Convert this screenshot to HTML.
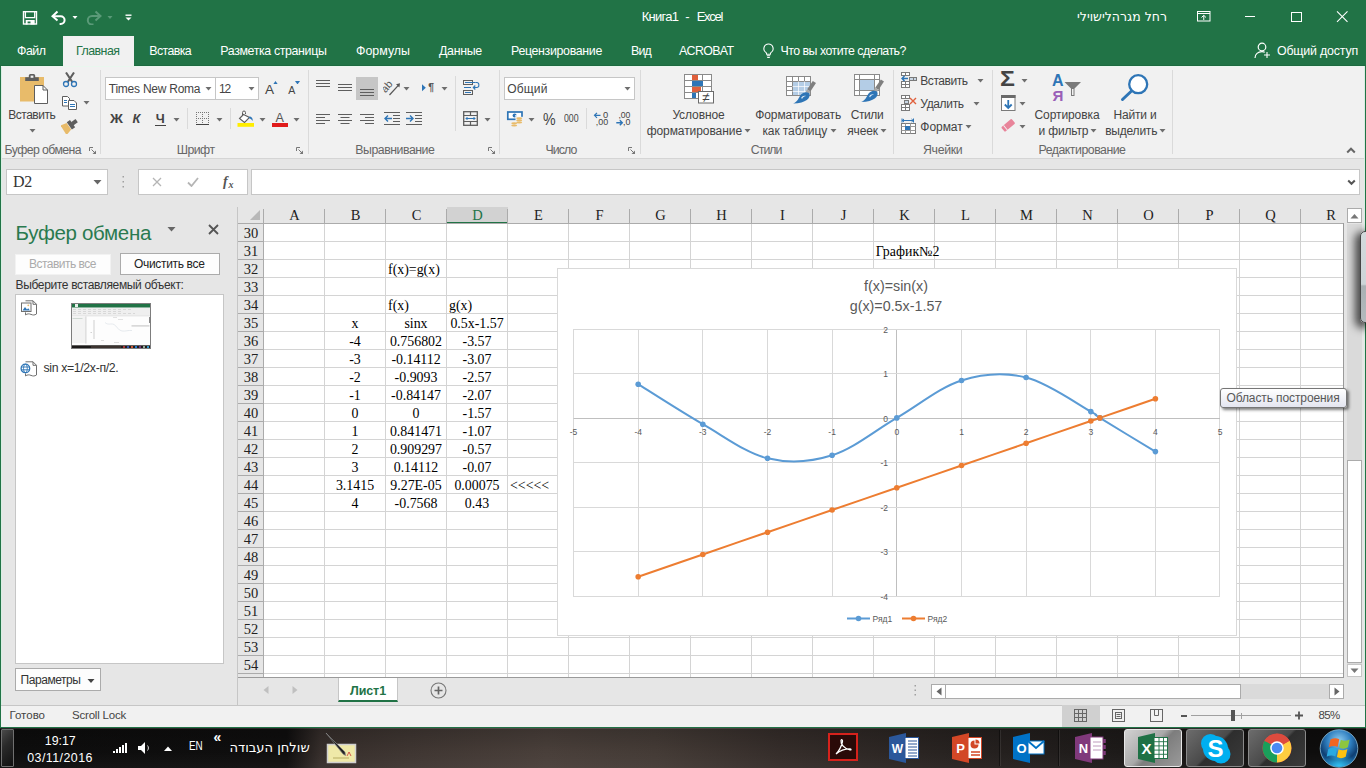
<!DOCTYPE html>
<html lang="ru"><head><meta charset="utf-8"><title>Книга1 - Excel</title>
<style>
html,body{margin:0;padding:0;overflow:hidden}
body{width:1366px;height:768px;overflow:hidden;position:relative;background:#e6e6e6;font-family:"Liberation Sans",sans-serif}
.t{position:absolute;white-space:nowrap;line-height:1;}
.b{position:absolute;box-sizing:border-box;display:block}
</style></head>
<body>
<!-- p_title -->
<div class="b" style="left:0px;top:0px;width:1366px;height:66px;background:#217346;"></div>
<svg class="b" style="left:22px;top:10px;" width="16" height="16" viewBox="0 0 16 16"><rect x="1.500" y="1.700" width="13" height="12.300" fill="none" stroke="#fff" stroke-width="1.400"/><path d="M3.400 1.700V7.600H12.700V1.700" fill="none" stroke="#fff" stroke-width="1.300"/><path d="M3.700 10.100H12.700V14.500H8.500V11.500H5.600V14.500H3.700z" fill="#fff"/></svg>
<svg class="b" style="left:51px;top:10px;" width="17" height="15" viewBox="0 0 17 15"><path d="M6.500 1.500 L1.500 6.200 L6.500 10.500" fill="none" stroke="#fff" stroke-width="2"/><path d="M2 6.200 H9.700 a3.900 3.900 0 0 1 0 7.800 H8.600" fill="none" stroke="#fff" stroke-width="2"/></svg>
<svg class="b" style="left:71.5px;top:16.0px" width="6" height="3.5" viewBox="0 0 6 3.5"><path d="M0.5 0 L5.5 0 L3.0 3.0 Z" fill="#fff"/></svg>
<svg class="b" style="left:85px;top:10px;" width="17" height="15" viewBox="0 0 17 15"><g transform="translate(17,0) scale(-1,1)"><path d="M6.5 1.5 L1.5 6 L6.5 10.5" fill="none" stroke="#5a9a78" stroke-width="2"/><path d="M2 6 H10 a4.2 4.2 0 0 1 0 8.4 H8.5" fill="none" stroke="#5a9a78" stroke-width="2"/></g></svg>
<svg class="b" style="left:106.5px;top:16.0px" width="6" height="3.5" viewBox="0 0 6 3.5"><path d="M0.5 0 L5.5 0 L3.0 3.0 Z" fill="#5a9a78"/></svg>
<svg class="b" style="left:125px;top:14px;" width="8" height="8" viewBox="0 0 8 8"><rect x="0.5" y="0.5" width="6" height="1.4" fill="#fff"/><path d="M0.5 3.5 h6 l-3 3z" fill="#fff"/></svg>
<div class="t" style="left:641.7px;top:10.3px;font-size:13px;color:#fff;letter-spacing:-0.738px;">Книга1</div>
<div class="t" style="left:685.2px;top:10.3px;font-size:13px;color:#fff;">-</div>
<div class="t" style="left:696.7px;top:10.3px;font-size:13px;color:#fff;letter-spacing:-1.298px;">Excel</div>
<div class="t" style="left:1077.0px;top:10.8px;font-size:12.5px;color:#fff;font-family:'DejaVu Sans','Liberation Sans',sans-serif;direction:rtl;unicode-bidi:bidi-override;">רחל מגרהלישוילי</div>
<svg class="b" style="left:1197px;top:11px;" width="14" height="11" viewBox="0 0 14 11"><rect x="0.500" y="0.500" width="12.500" height="9.500" fill="none" stroke="#fff"/><path d="M0.500 2.500h12.500" stroke="#fff"/><path d="M6.750 4.500v4.500M4.500 6.500l2.250-2.200 2.250 2.200" stroke="#fff" fill="none"/></svg>
<div class="b" style="left:1245px;top:16px;width:10px;height:1px;background:#fff;"></div>
<div class="b" style="left:1290.5px;top:11.5px;width:11px;height:10px;border:1px solid #fff;"></div>
<svg class="b" style="left:1336px;top:10px;" width="13" height="13" viewBox="0 0 13 13"><path d="M1 1.300l10.500 10.500M11.500 1.300L1 11.800" stroke="#fff" stroke-width="1.100"/></svg>
<div class="b" style="left:63px;top:36px;width:71px;height:30px;background:#f1f1f1;"></div>
<div class="t" style="left:17.0px;top:44.7px;font-size:12.4px;color:#fff;letter-spacing:-0.496px;">Файл</div>
<div class="t" style="left:76.0px;top:44.7px;font-size:12.4px;color:#217346;letter-spacing:-0.528px;">Главная</div>
<div class="t" style="left:149.3px;top:44.7px;font-size:12.4px;color:#fff;letter-spacing:-0.627px;">Вставка</div>
<div class="t" style="left:220.3px;top:44.7px;font-size:12.4px;color:#fff;letter-spacing:-0.370px;">Разметка страницы</div>
<div class="t" style="left:356.0px;top:44.7px;font-size:12.4px;color:#fff;letter-spacing:0.006px;">Формулы</div>
<div class="t" style="left:439.0px;top:44.7px;font-size:12.4px;color:#fff;letter-spacing:-0.300px;">Данные</div>
<div class="t" style="left:511.0px;top:44.7px;font-size:12.4px;color:#fff;letter-spacing:-0.339px;">Рецензирование</div>
<div class="t" style="left:631.0px;top:44.7px;font-size:12.4px;color:#fff;letter-spacing:-0.811px;">Вид</div>
<div class="t" style="left:679.0px;top:44.7px;font-size:12.4px;color:#fff;letter-spacing:-0.646px;">ACROBAT</div>
<div class="t" style="left:780.5px;top:44.7px;font-size:12.4px;color:#fff;letter-spacing:-0.526px;">Что вы хотите сделать?</div>
<div class="t" style="left:1277.0px;top:44.7px;font-size:12.4px;color:#fff;letter-spacing:-0.193px;">Общий доступ</div>
<svg class="b" style="left:762px;top:43px;" width="13" height="16" viewBox="0 0 13 16"><path d="M6.5 1a4.6 4.6 0 0 0-2.6 8.4c.5.5.7 1 .7 1.8h3.8c0-.8.2-1.3.7-1.8A4.6 4.6 0 0 0 6.500 1z" fill="none" stroke="#fff" stroke-width="1.1"/><path d="M4.8 12.8h3.4M5.2 14.5h2.6" stroke="#fff" stroke-width="1.1"/></svg>
<svg class="b" style="left:1254px;top:42px;" width="17" height="17" viewBox="0 0 17 17"><circle cx="8" cy="5" r="3.8" fill="none" stroke="#fff" stroke-width="1.2"/><path d="M1 16c0-4 3-6.3 7-6.3 1 0 2 .2 2.800.5" fill="none" stroke="#fff" stroke-width="1.2"/><path d="M13 10v6M10 13h6" stroke="#fff" stroke-width="1.100"/></svg>
<!-- p_ribbon -->
<div class="b" style="left:0px;top:66px;width:1366px;height:92px;background:#f1f1f1;"></div>
<div class="b" style="left:0px;top:158px;width:1366px;height:1px;background:#d5d5d5;"></div>
<div class="t" style="left:4.5px;top:144.0px;font-size:12.3px;color:#666;letter-spacing:-0.590px;">Буфер обмена</div>
<div class="t" style="left:176.7px;top:144.0px;font-size:12.3px;color:#666;letter-spacing:-0.534px;">Шрифт</div>
<div class="t" style="left:355.3px;top:144.0px;font-size:12.3px;color:#666;letter-spacing:-0.464px;">Выравнивание</div>
<div class="t" style="left:545.6px;top:144.0px;font-size:12.3px;color:#666;letter-spacing:-0.935px;">Число</div>
<div class="t" style="left:750.8px;top:144.0px;font-size:12.3px;color:#666;letter-spacing:-0.967px;">Стили</div>
<div class="t" style="left:923.0px;top:144.0px;font-size:12.3px;color:#666;letter-spacing:-0.326px;">Ячейки</div>
<div class="t" style="left:1038.5px;top:144.0px;font-size:12.3px;color:#666;letter-spacing:-0.478px;">Редактирование</div>
<svg class="b" style="left:89px;top:147px;" width="8" height="8" viewBox="0 0 8 8"><path d="M0.5 4V0.5H4" fill="none" stroke="#777"/><path d="M2.500 2.500L6.500 6.500" stroke="#777"/><path d="M7 3.500V7H3.500z" fill="#777"/></svg>
<svg class="b" style="left:296px;top:147px;" width="8" height="8" viewBox="0 0 8 8"><path d="M0.5 4V0.5H4" fill="none" stroke="#777"/><path d="M2.500 2.500L6.500 6.500" stroke="#777"/><path d="M7 3.500V7H3.500z" fill="#777"/></svg>
<svg class="b" style="left:488px;top:147px;" width="8" height="8" viewBox="0 0 8 8"><path d="M0.5 4V0.5H4" fill="none" stroke="#777"/><path d="M2.500 2.500L6.500 6.500" stroke="#777"/><path d="M7 3.500V7H3.500z" fill="#777"/></svg>
<svg class="b" style="left:628px;top:147px;" width="8" height="8" viewBox="0 0 8 8"><path d="M0.5 4V0.5H4" fill="none" stroke="#777"/><path d="M2.500 2.500L6.500 6.500" stroke="#777"/><path d="M7 3.500V7H3.500z" fill="#777"/></svg>
<div class="b" style="left:100px;top:70px;width:1px;height:84px;background:#dadada;"></div>
<div class="b" style="left:308px;top:70px;width:1px;height:84px;background:#dadada;"></div>
<div class="b" style="left:499px;top:70px;width:1px;height:84px;background:#dadada;"></div>
<div class="b" style="left:640px;top:70px;width:1px;height:84px;background:#dadada;"></div>
<div class="b" style="left:893px;top:70px;width:1px;height:84px;background:#dadada;"></div>
<div class="b" style="left:992px;top:70px;width:1px;height:84px;background:#dadada;"></div>
<div class="b" style="left:1172px;top:70px;width:1px;height:84px;background:#dadada;"></div>
<div class="t" style="left:8.2px;top:109.4px;font-size:12px;color:#444;letter-spacing:-0.471px;">Вставить</div>
<svg class="b" style="left:28.9px;top:128.8px" width="7" height="4.0" viewBox="0 0 7 4.0"><path d="M0.5 0 L6.5 0 L3.5 3.5 Z" fill="#6e6e6e"/></svg>
<svg class="b" style="left:83.0px;top:101.2px" width="7" height="4.0" viewBox="0 0 7 4.0"><path d="M0.5 0 L6.5 0 L3.5 3.5 Z" fill="#6e6e6e"/></svg>
<div class="b" style="left:105px;top:77px;width:111px;height:23px;background:#fff;border:1px solid #c6c6c6;"></div>
<div class="b" style="left:215px;top:77px;width:44px;height:23px;background:#fff;border:1px solid #c6c6c6;"></div>
<div class="t" style="left:108.8px;top:82.8px;font-size:12px;color:#444;letter-spacing:-0.243px;">Times New Roma</div>
<svg class="b" style="left:205.1px;top:87.2px" width="7" height="4.0" viewBox="0 0 7 4.0"><path d="M0.5 0 L6.5 0 L3.5 3.5 Z" fill="#6e6e6e"/></svg>
<div class="t" style="left:219.0px;top:82.8px;font-size:12px;color:#444;letter-spacing:-1.174px;">12</div>
<svg class="b" style="left:247.9px;top:87.2px" width="7" height="4.0" viewBox="0 0 7 4.0"><path d="M0.5 0 L6.5 0 L3.5 3.5 Z" fill="#6e6e6e"/></svg>
<div class="t" style="left:265.0px;top:82.9px;font-size:13.6px;color:#444;">A</div>
<svg class="b" style="left:273px;top:80.5px;" width="5" height="3.5" viewBox="0 0 5 3.5"><path d="M0 3.500L2.500 0L5 3.500z" fill="#2e75b6"/></svg>
<div class="t" style="left:288.3px;top:85.4px;font-size:10.6px;color:#444;">A</div>
<svg class="b" style="left:295px;top:80.5px;" width="5" height="3.5" viewBox="0 0 5 3.5"><path d="M0 0L2.500 3.500L5 0z" fill="#2e75b6"/></svg>
<div class="t" style="left:109.5px;top:113.2px;font-size:12.8px;color:#444;font-weight:bold;transform:scaleX(1.1151);transform-origin:0 0;">Ж</div>
<div class="t" style="left:132.5px;top:113.2px;font-size:12.8px;color:#444;font-weight:bold;font-style:italic;">К</div>
<div class="t" style="left:155.7px;top:113.2px;font-size:12.8px;color:#444;font-weight:bold;">Ч</div>
<div class="b" style="left:155px;top:125px;width:10.5px;height:1.3px;background:#444;"></div>
<svg class="b" style="left:172.7px;top:117.8px" width="7" height="4.0" viewBox="0 0 7 4.0"><path d="M0.5 0 L6.5 0 L3.5 3.5 Z" fill="#6e6e6e"/></svg>
<div class="b" style="left:187px;top:108px;width:1px;height:21px;background:#dadada;"></div>
<svg class="b" style="left:215.5px;top:117.8px" width="7" height="4.0" viewBox="0 0 7 4.0"><path d="M0.5 0 L6.5 0 L3.5 3.5 Z" fill="#6e6e6e"/></svg>
<div class="b" style="left:230px;top:108px;width:1px;height:21px;background:#dadada;"></div>
<svg class="b" style="left:258.5px;top:117.8px" width="7" height="4.0" viewBox="0 0 7 4.0"><path d="M0.5 0 L6.5 0 L3.5 3.5 Z" fill="#6e6e6e"/></svg>
<svg class="b" style="left:292.7px;top:117.8px" width="7" height="4.0" viewBox="0 0 7 4.0"><path d="M0.5 0 L6.5 0 L3.5 3.5 Z" fill="#6e6e6e"/></svg>
<div class="b" style="left:356px;top:77px;width:22px;height:23px;background:#c6c6c6;"></div>
<svg class="b" style="left:403.0px;top:86.8px" width="7" height="4.0" viewBox="0 0 7 4.0"><path d="M0.5 0 L6.5 0 L3.5 3.5 Z" fill="#6e6e6e"/></svg>
<svg class="b" style="left:440.9px;top:86.8px" width="7" height="4.0" viewBox="0 0 7 4.0"><path d="M0.5 0 L6.5 0 L3.5 3.5 Z" fill="#6e6e6e"/></svg>
<div class="b" style="left:455px;top:76px;width:1px;height:55px;background:#dadada;"></div>
<svg class="b" style="left:483.7px;top:117.8px" width="7" height="4.0" viewBox="0 0 7 4.0"><path d="M0.5 0 L6.5 0 L3.5 3.5 Z" fill="#6e6e6e"/></svg>
<div class="b" style="left:504px;top:77px;width:131px;height:23px;background:#fff;border:1px solid #c6c6c6;"></div>
<div class="t" style="left:507.3px;top:82.8px;font-size:12px;color:#444;letter-spacing:0.163px;">Общий</div>
<svg class="b" style="left:623.8px;top:87.2px" width="7" height="4.0" viewBox="0 0 7 4.0"><path d="M0.5 0 L6.5 0 L3.5 3.5 Z" fill="#6e6e6e"/></svg>
<svg class="b" style="left:528.0px;top:117.8px" width="7" height="4.0" viewBox="0 0 7 4.0"><path d="M0.5 0 L6.5 0 L3.5 3.5 Z" fill="#6e6e6e"/></svg>
<div class="t" style="left:543.4px;top:111.2px;font-size:16.5px;color:#444;transform:scaleX(0.8588);transform-origin:0 0;">%</div>
<div class="t" style="left:563.6px;top:113.3px;font-size:10.8px;color:#444;transform:scaleX(0.8102);transform-origin:0 0;">000</div>
<div class="b" style="left:586px;top:108px;width:1px;height:21px;background:#dadada;"></div>
<div class="t" style="left:672.4px;top:109.0px;font-size:12px;color:#444;letter-spacing:-0.098px;">Условное</div>
<div class="t" style="left:646.7px;top:124.6px;font-size:12px;color:#444;letter-spacing:-0.075px;">форматирование</div>
<svg class="b" style="left:744.0px;top:129.2px" width="7" height="4.0" viewBox="0 0 7 4.0"><path d="M0.5 0 L6.5 0 L3.5 3.5 Z" fill="#6e6e6e"/></svg>
<div class="t" style="left:755.2px;top:109.0px;font-size:12px;color:#444;letter-spacing:-0.091px;">Форматировать</div>
<div class="t" style="left:762.4px;top:124.6px;font-size:12px;color:#444;letter-spacing:-0.084px;">как таблицу</div>
<svg class="b" style="left:830.1px;top:129.2px" width="7" height="4.0" viewBox="0 0 7 4.0"><path d="M0.5 0 L6.5 0 L3.5 3.5 Z" fill="#6e6e6e"/></svg>
<div class="t" style="left:850.8px;top:109.0px;font-size:12px;color:#444;letter-spacing:-0.434px;">Стили</div>
<div class="t" style="left:847.3px;top:124.6px;font-size:12px;color:#444;letter-spacing:-0.190px;">ячеек</div>
<svg class="b" style="left:879.7px;top:129.2px" width="7" height="4.0" viewBox="0 0 7 4.0"><path d="M0.5 0 L6.5 0 L3.5 3.5 Z" fill="#6e6e6e"/></svg>
<div class="t" style="left:920.3px;top:74.8px;font-size:12px;color:#444;letter-spacing:-0.458px;">Вставить</div>
<svg class="b" style="left:977.0px;top:78.8px" width="7" height="4.0" viewBox="0 0 7 4.0"><path d="M0.5 0 L6.5 0 L3.5 3.5 Z" fill="#6e6e6e"/></svg>
<div class="t" style="left:920.3px;top:97.8px;font-size:12px;color:#444;letter-spacing:-0.345px;">Удалить</div>
<svg class="b" style="left:973.0px;top:101.8px" width="7" height="4.0" viewBox="0 0 7 4.0"><path d="M0.5 0 L6.5 0 L3.5 3.5 Z" fill="#6e6e6e"/></svg>
<div class="t" style="left:920.3px;top:120.6px;font-size:12px;color:#444;letter-spacing:-0.038px;">Формат</div>
<svg class="b" style="left:965.0px;top:124.8px" width="7" height="4.0" viewBox="0 0 7 4.0"><path d="M0.5 0 L6.5 0 L3.5 3.5 Z" fill="#6e6e6e"/></svg>
<svg class="b" style="left:1021.0px;top:78.8px" width="7" height="4.0" viewBox="0 0 7 4.0"><path d="M0.5 0 L6.5 0 L3.5 3.5 Z" fill="#6e6e6e"/></svg>
<svg class="b" style="left:1018.9px;top:101.8px" width="7" height="4.0" viewBox="0 0 7 4.0"><path d="M0.5 0 L6.5 0 L3.5 3.5 Z" fill="#6e6e6e"/></svg>
<svg class="b" style="left:1018.9px;top:124.8px" width="7" height="4.0" viewBox="0 0 7 4.0"><path d="M0.5 0 L6.5 0 L3.5 3.5 Z" fill="#6e6e6e"/></svg>
<div class="t" style="left:1034.5px;top:109.0px;font-size:12px;color:#444;letter-spacing:-0.086px;">Сортировка</div>
<div class="t" style="left:1038.5px;top:124.6px;font-size:12px;color:#444;letter-spacing:-0.175px;">и фильтр</div>
<svg class="b" style="left:1090.4px;top:129.2px" width="7" height="4.0" viewBox="0 0 7 4.0"><path d="M0.5 0 L6.5 0 L3.5 3.5 Z" fill="#6e6e6e"/></svg>
<div class="t" style="left:1113.4px;top:109.0px;font-size:12px;color:#444;letter-spacing:-0.154px;">Найти и</div>
<div class="t" style="left:1105.2px;top:124.6px;font-size:12px;color:#444;letter-spacing:-0.216px;">выделить</div>
<svg class="b" style="left:1158.8px;top:129.2px" width="7" height="4.0" viewBox="0 0 7 4.0"><path d="M0.5 0 L6.5 0 L3.5 3.5 Z" fill="#6e6e6e"/></svg>
<svg class="b" style="left:1346px;top:146px;" width="10" height="8" viewBox="0 0 10 8"><path d="M1.200 6.500L5 2.700L8.800 6.500" fill="none" stroke="#666" stroke-width="2"/></svg>
<svg class="b" style="left:19px;top:73px;" width="30" height="32" viewBox="0 0 30 32"><rect x="1" y="4" width="24" height="24.500" fill="#e8bb6a"/><path d="M6.200 8V4.200h3.600V2.600a1.600 1.600 0 0 1 1.600-1.600h3.200a1.600 1.600 0 0 1 1.600 1.600v1.600h3.600V8z" fill="#5e5e5e"/><rect x="11.600" y="2.600" width="2.800" height="2.200" fill="#f1f1f1"/><path d="M15.500 12.500h8.500l4.500 4.500v13.500h-13z" fill="#fff" stroke="#5e5e5e" stroke-width="1"/><path d="M24 12.500v4.500h4.500" fill="none" stroke="#5e5e5e"/></svg>
<svg class="b" style="left:62px;top:72px;" width="16" height="16" viewBox="0 0 16 16"><path d="M4 0.500L10.300 10M12 0.500L5.700 10" stroke="#5e5e5e" stroke-width="2.100" fill="none"/><circle cx="4" cy="12" r="2.500" fill="none" stroke="#2e75b6" stroke-width="1.300"/><circle cx="12" cy="12" r="2.500" fill="none" stroke="#2e75b6" stroke-width="1.300"/></svg>
<svg class="b" style="left:62px;top:95px;" width="16" height="16" viewBox="0 0 16 16"><path d="M0.500 1.500h5l2 2v7.500h-7z" fill="#fff" stroke="#5e5e5e"/><path d="M6.500 5.500h5.500l2.500 2.500v6.500h-8z" fill="#fff" stroke="#5e5e5e"/><rect x="2" y="5" width="3" height="1" fill="#2e75b6"/><rect x="2" y="7" width="3" height="1" fill="#2e75b6"/><rect x="8" y="9" width="5" height="1" fill="#2e75b6"/><rect x="8" y="11" width="5" height="1" fill="#2e75b6"/></svg>
<svg class="b" style="left:61px;top:118px;" width="18" height="16" viewBox="0 0 18 16"><g transform="rotate(-35 9 8)"><rect x="12" y="5.500" width="5.500" height="4" fill="#5e5e5e"/><rect x="8.500" y="3" width="4" height="9" fill="#5e5e5e"/><path d="M8 3.500L1.500 2L1 13.500L8 11.500z" fill="#e8bb6a"/></g></svg>
<svg class="b" style="left:196px;top:112px;" width="14" height="13" viewBox="0 0 14 13"><rect x="0" y="0" width="1" height="1" fill="#777"/><rect x="2" y="0" width="1" height="1" fill="#777"/><rect x="4" y="0" width="1" height="1" fill="#777"/><rect x="6" y="0" width="1" height="1" fill="#777"/><rect x="8" y="0" width="1" height="1" fill="#777"/><rect x="10" y="0" width="1" height="1" fill="#777"/><rect x="12" y="0" width="1" height="1" fill="#777"/><rect x="0" y="6" width="1" height="1" fill="#777"/><rect x="2" y="6" width="1" height="1" fill="#777"/><rect x="4" y="6" width="1" height="1" fill="#777"/><rect x="6" y="6" width="1" height="1" fill="#777"/><rect x="8" y="6" width="1" height="1" fill="#777"/><rect x="10" y="6" width="1" height="1" fill="#777"/><rect x="12" y="6" width="1" height="1" fill="#777"/><rect x="0" y="0" width="1" height="1" fill="#777"/><rect x="0" y="2" width="1" height="1" fill="#777"/><rect x="0" y="4" width="1" height="1" fill="#777"/><rect x="0" y="6" width="1" height="1" fill="#777"/><rect x="0" y="8" width="1" height="1" fill="#777"/><rect x="0" y="10" width="1" height="1" fill="#777"/><rect x="6" y="0" width="1" height="1" fill="#777"/><rect x="6" y="2" width="1" height="1" fill="#777"/><rect x="6" y="4" width="1" height="1" fill="#777"/><rect x="6" y="6" width="1" height="1" fill="#777"/><rect x="6" y="8" width="1" height="1" fill="#777"/><rect x="6" y="10" width="1" height="1" fill="#777"/><rect x="12" y="0" width="1" height="1" fill="#777"/><rect x="12" y="2" width="1" height="1" fill="#777"/><rect x="12" y="4" width="1" height="1" fill="#777"/><rect x="12" y="6" width="1" height="1" fill="#777"/><rect x="12" y="8" width="1" height="1" fill="#777"/><rect x="12" y="10" width="1" height="1" fill="#777"/><rect x="0" y="12" width="13" height="1" fill="#444"/></svg>
<svg class="b" style="left:237px;top:110px;" width="18" height="17" viewBox="0 0 18 17"><path d="M6.500 4.500L2.500 8.500L7.500 12.500L12.500 7.500z" fill="#fff" stroke="#5e5e5e" stroke-width="1.100"/><path d="M5.500 5.500V2.500a1.500 1.500 0 0 1 3 0V4" fill="none" stroke="#5e5e5e"/><path d="M12.500 6.500c2 0 3.500 1.500 3.200 4.500c-1-1.500-2-2.500-4.200-3z" fill="#2e75b6"/><rect x="0.500" y="13" width="16.500" height="3.800" fill="#ffed00"/></svg>
<div class="t" style="left:275.4px;top:112.0px;font-size:12.6px;color:#555;">A</div>
<div class="b" style="left:272px;top:123px;width:16px;height:3.8px;background:#e01b1b;"></div>
<svg class="b" style="left:316px;top:80px;" width="14" height="8" viewBox="0 0 14 8"><rect x="0" y="0" width="14" height="1" fill="#5e5e5e"/><rect x="0" y="3" width="14" height="1" fill="#5e5e5e"/><rect x="0" y="6" width="14" height="1" fill="#5e5e5e"/></svg>
<svg class="b" style="left:338px;top:84px;" width="14" height="8" viewBox="0 0 14 8"><rect x="0" y="0" width="14" height="1" fill="#5e5e5e"/><rect x="0" y="3" width="14" height="1" fill="#5e5e5e"/><rect x="0" y="6" width="14" height="1" fill="#5e5e5e"/></svg>
<svg class="b" style="left:360px;top:89px;" width="14" height="8" viewBox="0 0 14 8"><rect x="0" y="0" width="14" height="1" fill="#5e5e5e"/><rect x="0" y="3" width="14" height="1" fill="#5e5e5e"/><rect x="0" y="6" width="14" height="1" fill="#5e5e5e"/></svg>
<svg class="b" style="left:383px;top:79px;" width="18" height="18" viewBox="0 0 18 18"><g transform="rotate(-48 6 8)"><text x="-1" y="9.500" font-family="Liberation Sans,sans-serif" font-size="10.500" fill="#555">ab</text></g><path d="M6.500 16L15.800 5.800" stroke="#555" stroke-width="1.200"/><path d="M17 4.300l-0.600 4.200l-3.400-3.200z" fill="#555"/></svg>
<svg class="b" style="left:421px;top:83px;" width="14" height="11" viewBox="0 0 14 11"><path d="M1 1.300v7l3.800-3.500z" fill="#2e75b6"/><text x="7.200" y="8.300" font-family="Liberation Sans,sans-serif" font-weight="bold" font-size="10.500" fill="#555">¶</text></svg>
<svg class="b" style="left:463px;top:80px;" width="17" height="16" viewBox="0 0 17 16"><rect x="0.500" y="0.500" width="9" height="4" fill="none" stroke="#5e5e5e"/><path d="M2 2.500h10.500" stroke="#2e75b6"/><path d="M1 7.500h7" stroke="#2e75b6"/><rect x="0.500" y="10.500" width="9" height="4" fill="none" stroke="#5e5e5e"/><path d="M2 12.500h6" stroke="#2e75b6"/><path d="M12.500 2.500h1.500a1.800 1.800 0 0 1 1.800 1.800v1.400a1.800 1.800 0 0 1-1.800 1.800H10.500" fill="none" stroke="#2e75b6" stroke-width="1.100"/><path d="M12.300 5.500L10.300 7.500L12.300 9.500" fill="none" stroke="#2e75b6" stroke-width="1.100"/></svg>
<svg class="b" style="left:316px;top:114px;" width="14" height="12" viewBox="0 0 14 12"><rect x="0" y="0" width="14" height="1" fill="#5e5e5e"/><rect x="0" y="3" width="9" height="1" fill="#5e5e5e"/><rect x="0" y="6" width="14" height="1" fill="#5e5e5e"/><rect x="0" y="9" width="9" height="1" fill="#5e5e5e"/></svg>
<svg class="b" style="left:338px;top:114px;" width="14" height="12" viewBox="0 0 14 12"><rect x="0" y="0" width="14" height="1" fill="#5e5e5e"/><rect x="2.5" y="3" width="9" height="1" fill="#5e5e5e"/><rect x="0" y="6" width="14" height="1" fill="#5e5e5e"/><rect x="2.5" y="9" width="9" height="1" fill="#5e5e5e"/></svg>
<svg class="b" style="left:360px;top:114px;" width="14" height="12" viewBox="0 0 14 12"><rect x="0" y="0" width="14" height="1" fill="#5e5e5e"/><rect x="5" y="3" width="9" height="1" fill="#5e5e5e"/><rect x="0" y="6" width="14" height="1" fill="#5e5e5e"/><rect x="5" y="9" width="9" height="1" fill="#5e5e5e"/></svg>
<svg class="b" style="left:384px;top:112px;" width="17" height="14" viewBox="0 0 17 14"><rect x="0" y="0" width="16" height="1" fill="#5e5e5e"/><rect x="9" y="3" width="7" height="1" fill="#5e5e5e"/><rect x="9" y="6" width="7" height="1" fill="#5e5e5e"/><rect x="9" y="9" width="7" height="1" fill="#5e5e5e"/><rect x="0" y="12" width="16" height="1" fill="#5e5e5e"/><path d="M1 6.500h7M4 3.500L1 6.500L4 9.500" fill="none" stroke="#2e75b6" stroke-width="1.400"/></svg>
<svg class="b" style="left:406px;top:112px;" width="17" height="14" viewBox="0 0 17 14"><rect x="0" y="0" width="16" height="1" fill="#5e5e5e"/><rect x="9" y="3" width="7" height="1" fill="#5e5e5e"/><rect x="9" y="6" width="7" height="1" fill="#5e5e5e"/><rect x="9" y="9" width="7" height="1" fill="#5e5e5e"/><rect x="0" y="12" width="16" height="1" fill="#5e5e5e"/><path d="M0 6.500h7M4 3.500L7 6.500L4 9.500" fill="none" stroke="#2e75b6" stroke-width="1.400"/></svg>
<svg class="b" style="left:463px;top:111px;" width="16" height="16" viewBox="0 0 16 16"><rect x="0.700" y="0.700" width="13.600" height="13.600" fill="none" stroke="#5e5e5e" stroke-width="1.300"/><path d="M0.500 4.500h14M0.500 10.500h14M7.500 0.500v4M7.500 10.500v4" stroke="#5e5e5e" stroke-width="1.200"/><path d="M3 7.500h9M4.500 6L3 7.500L4.500 9M10.500 6L12 7.500L10.500 9" fill="none" stroke="#2e75b6" stroke-width="1"/></svg>
<svg class="b" style="left:506px;top:110px;" width="18" height="18" viewBox="0 0 18 18"><rect x="1.800" y="2" width="14.200" height="7.300" fill="#fff" stroke="#2e75b6" stroke-width="1.700"/><circle cx="8.600" cy="5.600" r="2" fill="#2e75b6"/><rect x="9" y="5.300" width="2.500" height="1.200" fill="#fff"/><rect x="9.500" y="6.800" width="7.500" height="7" fill="#f1f1f1"/><rect x="4.500" y="11" width="7.500" height="6.500" fill="#f1f1f1"/><ellipse cx="13.2" cy="8.3" rx="3" ry="1.100" fill="#e8bb6a"/><ellipse cx="13.2" cy="10.4" rx="3" ry="1.100" fill="#e8bb6a"/><ellipse cx="13.2" cy="12.5" rx="3" ry="1.100" fill="#e8bb6a"/><ellipse cx="8.2" cy="13.3" rx="3" ry="1.100" fill="#e8bb6a"/><ellipse cx="8.2" cy="15.5" rx="3" ry="1.100" fill="#e8bb6a"/></svg>
<svg class="b" style="left:593px;top:111px;" width="17" height="16" viewBox="0 0 17 16"><path d="M1.500 4.300h6M4 1.800L1.500 4.300L4 6.800" fill="none" stroke="#2e75b6" stroke-width="1.200"/><text x="10" y="6.600" font-family="Liberation Sans,sans-serif" font-size="8.300" fill="#444" textLength="5.200" lengthAdjust="spacingAndGlyphs">0</text><text x="2.800" y="14.300" font-family="Liberation Sans,sans-serif" font-size="8.300" fill="#444" textLength="12.400" lengthAdjust="spacingAndGlyphs">,00</text></svg>
<svg class="b" style="left:615px;top:111px;" width="17" height="16" viewBox="0 0 17 16"><text x="3.400" y="6.600" font-family="Liberation Sans,sans-serif" font-size="8.300" fill="#444" textLength="12" lengthAdjust="spacingAndGlyphs">,00</text><path d="M1.300 11.800h6M4.800 9.300L7.300 11.800L4.800 14.300" fill="none" stroke="#2e75b6" stroke-width="1.400"/><text x="8" y="14.300" font-family="Liberation Sans,sans-serif" font-size="8.300" fill="#444" textLength="7.400" lengthAdjust="spacingAndGlyphs">,0</text></svg>
<svg class="b" style="left:684px;top:74px;" width="31" height="30" viewBox="0 0 31 30"><rect x="0.5" y="0.5" width="27" height="24" fill="#fff" stroke="#8a8a8a"/><path d="M9.5 0v24" stroke="#8a8a8a"/><path d="M18.5 0v24" stroke="#8a8a8a"/><path d="M0 6.5h27" stroke="#8a8a8a"/><path d="M0 12.5h27" stroke="#8a8a8a"/><path d="M0 18.5h27" stroke="#8a8a8a"/><rect x="8" y="1" width="6" height="5" fill="#e0603c"/><rect x="8" y="7" width="11" height="5" fill="#2e75b6"/><rect x="8" y="13" width="9" height="5" fill="#e0603c"/><rect x="8" y="19" width="4" height="5" fill="#2e75b6"/><rect x="14.500" y="17.500" width="15" height="11.500" fill="#fff" stroke="#6a6a6a"/><text x="22" y="27.800" font-family="Liberation Sans,sans-serif" font-size="13.500" fill="#444" text-anchor="middle">≠</text></svg>
<svg class="b" style="left:786px;top:76px;" width="31" height="29" viewBox="0 0 31 29"><rect x="0.5" y="0.5" width="24" height="19" fill="#fff" stroke="#8a8a8a"/><path d="M6.5 0v19" stroke="#8a8a8a"/><path d="M12.5 0v19" stroke="#8a8a8a"/><path d="M18.5 0v19" stroke="#8a8a8a"/><path d="M0 5.5h24" stroke="#8a8a8a"/><path d="M0 10.5h24" stroke="#8a8a8a"/><path d="M0 14.5h24" stroke="#8a8a8a"/><rect x="7" y="6" width="17" height="13" fill="#b4cde6"/><path d="M12.500 5.500v14" stroke="#fff" stroke-opacity="0.700"/><path d="M18.500 5.500v14" stroke="#fff" stroke-opacity="0.700"/><path d="M6.500 10.500h18" stroke="#fff" stroke-opacity="0.700"/><path d="M6.500 15.500h18" stroke="#fff" stroke-opacity="0.700"/><path d="M0.500 0.500h24v19h-24z" fill="none" stroke="#8a8a8a"/><path d="M28.4 6L22.799999999999997 14.4" stroke="#7f7f7f" stroke-width="3.800"/><path d="M22.799999999999997 14.4L21.2 16.8" stroke="#a8a8a8" stroke-width="3.800"/><path d="M23.2 17.2c2 4.500-3 10-16 10.400c4.500-2 5.500-5.500 7-8c1.800-3 6-4.500 9-2.400z" fill="#2e75b6"/><path d="M15.2 21.8c1-1.800 3.200-2.600 4.800-1.700c-1.800 0.300-3.200 1.300-4 2.900z" fill="#e4eef8"/></svg>
<svg class="b" style="left:854px;top:74px;" width="31" height="30" viewBox="0 0 31 30"><rect x="0.5" y="0.5" width="25" height="21" fill="#fff" stroke="#8a8a8a"/><path d="M5.500 0v21M20.500 0v21M0 5.500h25M0 16.500h25" stroke="#8a8a8a"/><rect x="6" y="6" width="14" height="10" fill="#b4cde6"/><path d="M28.4 6.5L22.799999999999997 14.9" stroke="#7f7f7f" stroke-width="3.800"/><path d="M22.799999999999997 14.9L21.2 17.3" stroke="#a8a8a8" stroke-width="3.800"/><path d="M23.2 17.7c2 4.500-3 10-16 10.400c4.500-2 5.500-5.500 7-8c1.800-3 6-4.500 9-2.400z" fill="#2e75b6"/><path d="M15.2 22.3c1-1.800 3.200-2.600 4.800-1.700c-1.800 0.300-3.200 1.300-4 2.900z" fill="#e4eef8"/></svg>
<svg class="b" style="left:901px;top:72px;" width="17" height="17" viewBox="0 0 17 17"><rect x="0.5" y="0.5" width="4" height="3" fill="#fff" stroke="#7a7a7a"/><rect x="4.5" y="0.5" width="4" height="3" fill="#fff" stroke="#7a7a7a"/><rect x="8.5" y="5.5" width="4" height="3" fill="#c8d6e4" stroke="#7a7a7a"/><rect x="12.5" y="5.5" width="3" height="3" fill="#c8d6e4" stroke="#7a7a7a"/><rect x="0.5" y="9.5" width="4" height="3" fill="#fff" stroke="#7a7a7a"/><rect x="4.5" y="9.5" width="4" height="3" fill="#fff" stroke="#7a7a7a"/><rect x="0.5" y="12.5" width="4" height="3" fill="#fff" stroke="#7a7a7a"/><rect x="4.5" y="12.5" width="4" height="3" fill="#fff" stroke="#7a7a7a"/><path d="M1 6.500h6M3.500 4L1 6.500L3.500 9" fill="none" stroke="#2e75b6" stroke-width="1.500"/></svg>
<svg class="b" style="left:901px;top:95px;" width="17" height="17" viewBox="0 0 17 17"><rect x="0.5" y="0.5" width="4" height="3" fill="#fff" stroke="#7a7a7a"/><rect x="4.5" y="0.5" width="4" height="3" fill="#fff" stroke="#7a7a7a"/><rect x="3.5" y="5.5" width="4" height="3" fill="#c8d6e4" stroke="#7a7a7a"/><rect x="0.5" y="9.5" width="4" height="3" fill="#fff" stroke="#7a7a7a"/><rect x="4.5" y="9.5" width="4" height="3" fill="#fff" stroke="#7a7a7a"/><rect x="0.5" y="12.5" width="4" height="3" fill="#fff" stroke="#7a7a7a"/><rect x="4.5" y="12.5" width="4" height="3" fill="#fff" stroke="#7a7a7a"/><path d="M9 3L15 9M15 3L9 9" stroke="#e0603c" stroke-width="1.400"/></svg>
<svg class="b" style="left:901px;top:118px;" width="16" height="17" viewBox="0 0 16 17"><path d="M1 2.500h11M1 0.500v4M12.500 0.500v4M3 1L1.200 2.500L3 4M10.500 1L12.200 2.500L10.500 4" fill="none" stroke="#2e75b6" stroke-width="1"/><rect x="0.500" y="5.500" width="14" height="10" fill="#fff" stroke="#7a7a7a"/><path d="M0.500 8.500h14M0.500 12.500h14M4.500 5.500v10M9.500 5.500v10" stroke="#9a9a9a"/><rect x="4" y="8" width="5" height="4" fill="#2e75b6"/></svg>
<div class="t" style="left:1000.3px;top:68.7px;font-size:21.5px;color:#444;font-weight:bold;transform:scaleX(1.1549);transform-origin:0 0;">Σ</div>
<svg class="b" style="left:1001px;top:95px;" width="15" height="16" viewBox="0 0 15 16"><rect x="0.500" y="0.500" width="13.500" height="15" fill="#fff" stroke="#7a7a7a"/><rect x="0" y="0" width="14.500" height="3" fill="#6a6a6a"/><path d="M7.250 5v8M3.800 9.500L7.250 13L10.700 9.500" fill="none" stroke="#2e75b6" stroke-width="1.800"/></svg>
<svg class="b" style="left:1000px;top:118px;" width="16" height="15" viewBox="0 0 16 15"><g transform="rotate(-40 8 7.500)"><rect x="1.500" y="4.500" width="13.500" height="6" rx="1" fill="#e8849a"/><rect x="4.200" y="4.500" width="0.900" height="6" fill="#f1f1f1"/></g></svg>
<div class="t" style="left:1052.0px;top:73.1px;font-size:16px;color:#2e75b6;font-weight:bold;">A</div>
<div class="t" style="left:1052.6px;top:87.8px;font-size:15.2px;color:#9a5fb8;font-weight:bold;">Я</div>
<svg class="b" style="left:1064px;top:81px;" width="18" height="17" viewBox="0 0 18 17"><path d="M0.500 1h16.500l-6.500 6.500v7.500h-3.500v-7.500z" fill="#7a7a7a"/><rect x="8" y="8" width="1.500" height="6" fill="#f1f1f1"/></svg>
<svg class="b" style="left:1120px;top:73px;" width="30" height="30" viewBox="0 0 30 30"><circle cx="18.200" cy="11.200" r="9" fill="#fff" stroke="#2e75b6" stroke-width="2.300"/><path d="M11.500 18L2.500 26.500" stroke="#2e75b6" stroke-width="3" stroke-linecap="round"/></svg>
<!-- p_formula -->
<div class="b" style="left:0px;top:66px;width:1px;height:662px;background:#217346;"></div>
<div class="b" style="left:1px;top:66px;width:1px;height:661px;background:#d9efe3;"></div>
<div class="b" style="left:0px;top:65px;width:63px;height:1px;background:#1d6a40;"></div>
<div class="b" style="left:134px;top:65px;width:1232px;height:1px;background:#1d6a40;"></div>
<div class="b" style="left:1px;top:66px;width:1363px;height:1px;background:#e9f7ee;"></div>
<div class="b" style="left:1364px;top:66px;width:1px;height:661px;background:#d9efe3;"></div>
<div class="b" style="left:1365px;top:66px;width:1px;height:662px;background:#217346;"></div>
<div class="b" style="left:6px;top:169px;width:102px;height:26px;background:#fff;border:1px solid #c6c6c6;"></div>
<div class="t" style="left:13.0px;top:174.2px;font-size:16px;color:#333;font-family:'Liberation Serif',serif;letter-spacing:-0.277px;">D2</div>
<svg class="b" style="left:92.5px;top:180.2px" width="9" height="5.0" viewBox="0 0 9 5.0"><path d="M0.5 0 L8.5 0 L4.5 4.5 Z" fill="#666"/></svg>
<svg class="b" style="left:122px;top:176px;" width="3" height="13" viewBox="0 0 3 13"><rect x="0.500" y="0" width="1.500" height="1.500" fill="#a0a0a0"/><rect x="0.500" y="5" width="1.500" height="1.500" fill="#a0a0a0"/><rect x="0.500" y="10" width="1.500" height="1.500" fill="#a0a0a0"/></svg>
<div class="b" style="left:138px;top:169px;width:110px;height:26px;background:#fff;border:1px solid #c6c6c6;"></div>
<svg class="b" style="left:152px;top:177px;" width="10" height="10" viewBox="0 0 10 10"><path d="M1 1L9 9M9 1L1 9" stroke="#b5b5b5" stroke-width="1.300"/></svg>
<svg class="b" style="left:187px;top:177px;" width="12" height="10" viewBox="0 0 12 10"><path d="M1 5.500L4.500 9L11 1" stroke="#b5b5b5" stroke-width="1.800" fill="none"/></svg>
<div class="t" style="left:223.0px;top:175.3px;font-size:14px;color:#555;font-family:'Liberation Serif',serif;font-weight:bold;font-style:italic;">f</div>
<div class="t" style="left:228.5px;top:179.6px;font-size:10px;color:#555;font-family:'Liberation Serif',serif;font-weight:bold;font-style:italic;">x</div>
<div class="b" style="left:251px;top:169px;width:1109px;height:26px;background:#fff;border:1px solid #c6c6c6;"></div>
<svg class="b" style="left:1347px;top:179px;" width="9" height="7" viewBox="0 0 9 7"><path d="M1.200 1.500L4.500 4.800L7.800 1.500" fill="none" stroke="#555" stroke-width="2"/></svg>
<!-- p_pane -->
<div class="t" style="left:15.5px;top:222.9px;font-size:20.5px;color:#2a7a4f;letter-spacing:-0.316px;">Буфер обмена</div>
<svg class="b" style="left:167.0px;top:226.8px" width="9" height="5.0" viewBox="0 0 9 5.0"><path d="M0.5 0 L8.5 0 L4.5 4.5 Z" fill="#666"/></svg>
<svg class="b" style="left:208px;top:224px;" width="11" height="11" viewBox="0 0 11 11"><path d="M1 1L10 10M10 1L1 10" stroke="#555" stroke-width="1.800"/></svg>
<div class="b" style="left:15px;top:254px;width:96px;height:21px;background:#fdfdfd;border:1px solid #f2f2f2;"></div>
<div class="t" style="left:29.0px;top:258.1px;font-size:12px;color:#ababab;letter-spacing:-0.509px;">Вставить все</div>
<div class="b" style="left:120px;top:253px;width:100px;height:22px;background:#fdfdfd;border:1px solid #ababab;"></div>
<div class="t" style="left:134.0px;top:258.1px;font-size:12px;color:#222;letter-spacing:-0.332px;">Очистить все</div>
<div class="t" style="left:15.5px;top:279.1px;font-size:12px;color:#333;letter-spacing:-0.349px;">Выберите вставляемый объект:</div>
<div class="b" style="left:15px;top:294px;width:209px;height:370px;background:#fff;border:1px solid #c6c6c6;"></div>
<svg class="b" style="left:20px;top:300px;" width="18" height="17" viewBox="0 0 18 17"><path d="M5.500 0.800h7.500l3.500 3.500v9.700c-2 1.300-3.500 1.200-5.500 0.400s-3.500-0.800-5.500 0.500v-2.500" fill="#fff" stroke="#6f6f6f"/><path d="M13 0.800v3.500h3.500" fill="none" stroke="#6f6f6f"/><rect x="1.500" y="3" width="9.500" height="8.500" fill="#fff" stroke="#6f6f6f"/><path d="M2.500 10.500l2.500-3.500l2 2.500l1.200-1.300l1.800 2.300z" fill="#2e75b6"/><circle cx="8.300" cy="5.300" r="0.900" fill="#e8bb6a"/></svg>
<svg class="b" style="left:71px;top:303px;" width="80" height="46" viewBox="0 0 80 46"><rect x="0" y="0" width="80" height="46" fill="#fdfdfd"/><rect x="0.500" y="0.500" width="79" height="4.200" fill="#217346"/><rect x="0.500" y="4.700" width="79" height="7.500" fill="#efefef"/><rect x="4" y="1" width="3" height="3" fill="#e9f1ec"/><path d="M2 6.500h60M2 8.500h50M2 10.500h62" stroke="#d2d2d2" stroke-width="0.800" stroke-dasharray="3 2"/><rect x="0.500" y="12.200" width="79" height="1.200" fill="#e4e4e4"/><rect x="1" y="13.500" width="13" height="26.500" fill="#f3f3f3"/><rect x="1.500" y="15" width="10" height="1" fill="#cfd8d2"/><rect x="14.500" y="13.500" width="0.800" height="27" fill="#c4c4c4"/><rect x="22.500" y="17" width="1" height="19" fill="#cfcfcf"/><rect x="19.500" y="29" width="1.500" height="0.800" fill="#c8c8c8"/><path d="M34 19.500c3 3 6 0.500 9 2s4 6 8 6.500s6-1 10-0.500" fill="none" stroke="#dfe5ea" stroke-width="0.800"/><path d="M42 14.500h4M47 16.500h5" stroke="#d5d5d5" stroke-width="0.700"/><rect x="60.500" y="22.300" width="18" height="1.200" fill="#c9c9c9"/><rect x="78" y="14" width="1.200" height="6" fill="#8a8a8a"/><path d="M30 37.500h3M43 39.500h5" stroke="#d0d0d0" stroke-width="0.700"/><rect x="0.500" y="42.300" width="79" height="3.200" fill="#1c1a19"/><rect x="20" y="42.800" width="30" height="2.200" fill="#3b322e"/><rect x="52" y="43" width="2" height="2" fill="#a33"/><rect x="56" y="43" width="2" height="2" fill="#35a"/><rect x="60" y="43" width="2" height="2" fill="#c53"/><rect x="64" y="43" width="2" height="2" fill="#27c"/><rect x="68" y="43" width="2" height="2" fill="#737"/><rect x="72" y="43" width="2" height="2" fill="#9a9"/><rect x="76" y="43" width="2" height="2" fill="#39c"/><rect x="0.500" y="0.500" width="79" height="45" fill="none" stroke="#7d7d7d"/></svg>
<svg class="b" style="left:20px;top:361px;" width="18" height="17" viewBox="0 0 18 17"><path d="M5.500 0.800h7.500l3.500 3.500v9.700c-2 1.300-3.500 1.200-5.500 0.400s-3.500-0.800-5.500 0.500v-2.500" fill="#fff" stroke="#6f6f6f"/><path d="M13 0.800v3.500h3.500" fill="none" stroke="#6f6f6f"/><circle cx="5.400" cy="7.400" r="4.300" fill="#fff" stroke="#2e75b6" stroke-width="1.300"/><path d="M1.200 6h8.400M1.200 8.800h8.400" stroke="#2e75b6" stroke-width="0.900"/><ellipse cx="5.400" cy="7.400" rx="1.900" ry="4.200" fill="none" stroke="#2e75b6" stroke-width="0.900"/></svg>
<div class="t" style="left:43.5px;top:362.1px;font-size:12.3px;color:#333;letter-spacing:-0.357px;">sin x=1/2x-п/2.</div>
<div class="b" style="left:15px;top:668px;width:86px;height:23px;background:#fdfdfd;border:1px solid #ababab;"></div>
<div class="t" style="left:20.5px;top:673.8px;font-size:12px;color:#333;letter-spacing:-0.441px;">Параметры</div>
<svg class="b" style="left:86.7px;top:678.5px" width="8" height="4.5" viewBox="0 0 8 4.5"><path d="M0.5 0 L7.5 0 L4.0 4.0 Z" fill="#444"/></svg>
<div class="b" style="left:237px;top:207px;width:1px;height:498px;background:#c6c6c6;"></div>
<!-- p_grid -->
<div class="b" style="left:238px;top:207px;width:1106px;height:471px;background:#fff;"></div>
<div class="b" style="left:238px;top:207px;width:1106px;height:17px;background:#e6e6e6;"></div>
<div class="b" style="left:238px;top:224px;width:26px;height:454px;background:#e6e6e6;"></div>
<div class="b" style="left:447px;top:207px;width:61px;height:16px;background:#d2d2d2;"></div>
<div class="b" style="left:447px;top:222px;width:61px;height:2px;background:#217346;"></div>
<svg class="b" style="left:249px;top:209px;" width="12" height="12" viewBox="0 0 12 12"><path d="M11 1V11H1z" fill="#b8b8b8"/></svg>
<svg class="b" style="left:238px;top:207px;" width="1106" height="471" viewBox="0 0 1106 471"><path d="M25.5 17V471" stroke="#d4d4d4"/><path d="M25.5 2V17" stroke="#ababab"/><path d="M86.5 17V471" stroke="#d4d4d4"/><path d="M86.5 2V17" stroke="#ababab"/><path d="M147.5 17V471" stroke="#d4d4d4"/><path d="M147.5 2V17" stroke="#ababab"/><path d="M208.5 17V471" stroke="#d4d4d4"/><path d="M208.5 2V17" stroke="#ababab"/><path d="M269.5 17V471" stroke="#d4d4d4"/><path d="M269.5 2V17" stroke="#ababab"/><path d="M330.5 17V471" stroke="#d4d4d4"/><path d="M330.5 2V17" stroke="#ababab"/><path d="M391.5 17V471" stroke="#d4d4d4"/><path d="M391.5 2V17" stroke="#ababab"/><path d="M452.5 17V471" stroke="#d4d4d4"/><path d="M452.5 2V17" stroke="#ababab"/><path d="M513.5 17V471" stroke="#d4d4d4"/><path d="M513.5 2V17" stroke="#ababab"/><path d="M574.5 17V471" stroke="#d4d4d4"/><path d="M574.5 2V17" stroke="#ababab"/><path d="M635.5 17V471" stroke="#d4d4d4"/><path d="M635.5 2V17" stroke="#ababab"/><path d="M696.5 17V471" stroke="#d4d4d4"/><path d="M696.5 2V17" stroke="#ababab"/><path d="M757.5 17V471" stroke="#d4d4d4"/><path d="M757.5 2V17" stroke="#ababab"/><path d="M818.5 17V471" stroke="#d4d4d4"/><path d="M818.5 2V17" stroke="#ababab"/><path d="M879.5 17V471" stroke="#d4d4d4"/><path d="M879.5 2V17" stroke="#ababab"/><path d="M940.5 17V471" stroke="#d4d4d4"/><path d="M940.5 2V17" stroke="#ababab"/><path d="M1001.5 17V471" stroke="#d4d4d4"/><path d="M1001.5 2V17" stroke="#ababab"/><path d="M1062.5 17V471" stroke="#d4d4d4"/><path d="M1062.5 2V17" stroke="#ababab"/><path d="M26 16.5H1106" stroke="#d4d4d4"/><path d="M0 16.5H26" stroke="#ababab"/><path d="M26 34.5H1106" stroke="#d4d4d4"/><path d="M0 34.5H26" stroke="#ababab"/><path d="M26 52.5H1106" stroke="#d4d4d4"/><path d="M0 52.5H26" stroke="#ababab"/><path d="M26 70.5H1106" stroke="#d4d4d4"/><path d="M0 70.5H26" stroke="#ababab"/><path d="M26 88.5H1106" stroke="#d4d4d4"/><path d="M0 88.5H26" stroke="#ababab"/><path d="M26 106.5H1106" stroke="#d4d4d4"/><path d="M0 106.5H26" stroke="#ababab"/><path d="M26 124.5H1106" stroke="#d4d4d4"/><path d="M0 124.5H26" stroke="#ababab"/><path d="M26 142.5H1106" stroke="#d4d4d4"/><path d="M0 142.5H26" stroke="#ababab"/><path d="M26 160.5H1106" stroke="#d4d4d4"/><path d="M0 160.5H26" stroke="#ababab"/><path d="M26 178.5H1106" stroke="#d4d4d4"/><path d="M0 178.5H26" stroke="#ababab"/><path d="M26 196.5H1106" stroke="#d4d4d4"/><path d="M0 196.5H26" stroke="#ababab"/><path d="M26 214.5H1106" stroke="#d4d4d4"/><path d="M0 214.5H26" stroke="#ababab"/><path d="M26 232.5H1106" stroke="#d4d4d4"/><path d="M0 232.5H26" stroke="#ababab"/><path d="M26 250.5H1106" stroke="#d4d4d4"/><path d="M0 250.5H26" stroke="#ababab"/><path d="M26 268.5H1106" stroke="#d4d4d4"/><path d="M0 268.5H26" stroke="#ababab"/><path d="M26 286.5H1106" stroke="#d4d4d4"/><path d="M0 286.5H26" stroke="#ababab"/><path d="M26 304.5H1106" stroke="#d4d4d4"/><path d="M0 304.5H26" stroke="#ababab"/><path d="M26 322.5H1106" stroke="#d4d4d4"/><path d="M0 322.5H26" stroke="#ababab"/><path d="M26 340.5H1106" stroke="#d4d4d4"/><path d="M0 340.5H26" stroke="#ababab"/><path d="M26 358.5H1106" stroke="#d4d4d4"/><path d="M0 358.5H26" stroke="#ababab"/><path d="M26 376.5H1106" stroke="#d4d4d4"/><path d="M0 376.5H26" stroke="#ababab"/><path d="M26 394.5H1106" stroke="#d4d4d4"/><path d="M0 394.5H26" stroke="#ababab"/><path d="M26 412.5H1106" stroke="#d4d4d4"/><path d="M0 412.5H26" stroke="#ababab"/><path d="M26 430.5H1106" stroke="#d4d4d4"/><path d="M0 430.5H26" stroke="#ababab"/><path d="M26 448.5H1106" stroke="#d4d4d4"/><path d="M0 448.5H26" stroke="#ababab"/><path d="M26 466.5H1106" stroke="#d4d4d4"/><path d="M0 466.5H26" stroke="#ababab"/><path d="M25.500 17V471" stroke="#ababab"/><path d="M0 16.500H1106" stroke="#ababab"/></svg>
<div class="t" style="left:289.3px;top:208.2px;font-size:14.5px;color:#222;font-family:'Liberation Serif',serif;">A</div>
<div class="t" style="left:350.7px;top:208.2px;font-size:14.5px;color:#222;font-family:'Liberation Serif',serif;">B</div>
<div class="t" style="left:411.7px;top:208.2px;font-size:14.5px;color:#222;font-family:'Liberation Serif',serif;">C</div>
<div class="t" style="left:472.3px;top:208.2px;font-size:14.5px;color:#217346;font-family:'Liberation Serif',serif;">D</div>
<div class="t" style="left:534.1px;top:208.2px;font-size:14.5px;color:#222;font-family:'Liberation Serif',serif;">E</div>
<div class="t" style="left:595.5px;top:208.2px;font-size:14.5px;color:#222;font-family:'Liberation Serif',serif;">F</div>
<div class="t" style="left:655.3px;top:208.2px;font-size:14.5px;color:#222;font-family:'Liberation Serif',serif;">G</div>
<div class="t" style="left:716.3px;top:208.2px;font-size:14.5px;color:#222;font-family:'Liberation Serif',serif;">H</div>
<div class="t" style="left:780.1px;top:208.2px;font-size:14.5px;color:#222;font-family:'Liberation Serif',serif;">I</div>
<div class="t" style="left:840.7px;top:208.2px;font-size:14.5px;color:#222;font-family:'Liberation Serif',serif;">J</div>
<div class="t" style="left:899.3px;top:208.2px;font-size:14.5px;color:#222;font-family:'Liberation Serif',serif;">K</div>
<div class="t" style="left:961.1px;top:208.2px;font-size:14.5px;color:#222;font-family:'Liberation Serif',serif;">L</div>
<div class="t" style="left:1020.1px;top:208.2px;font-size:14.5px;color:#222;font-family:'Liberation Serif',serif;">M</div>
<div class="t" style="left:1082.3px;top:208.2px;font-size:14.5px;color:#222;font-family:'Liberation Serif',serif;">N</div>
<div class="t" style="left:1143.3px;top:208.2px;font-size:14.5px;color:#222;font-family:'Liberation Serif',serif;">O</div>
<div class="t" style="left:1205.5px;top:208.2px;font-size:14.5px;color:#222;font-family:'Liberation Serif',serif;">P</div>
<div class="t" style="left:1265.3px;top:208.2px;font-size:14.5px;color:#222;font-family:'Liberation Serif',serif;">Q</div>
<div class="t" style="left:1326.2px;top:208.2px;font-size:14.5px;color:#222;font-family:'Liberation Serif',serif;">R</div>
<div class="t" style="left:243.8px;top:226.1px;font-size:14.5px;color:#222;font-family:'Liberation Serif',serif;">30</div>
<div class="t" style="left:243.8px;top:244.1px;font-size:14.5px;color:#222;font-family:'Liberation Serif',serif;">31</div>
<div class="t" style="left:243.8px;top:262.1px;font-size:14.5px;color:#222;font-family:'Liberation Serif',serif;">32</div>
<div class="t" style="left:243.8px;top:280.1px;font-size:14.5px;color:#222;font-family:'Liberation Serif',serif;">33</div>
<div class="t" style="left:243.8px;top:298.1px;font-size:14.5px;color:#222;font-family:'Liberation Serif',serif;">34</div>
<div class="t" style="left:243.8px;top:316.1px;font-size:14.5px;color:#222;font-family:'Liberation Serif',serif;">35</div>
<div class="t" style="left:243.8px;top:334.1px;font-size:14.5px;color:#222;font-family:'Liberation Serif',serif;">36</div>
<div class="t" style="left:243.8px;top:352.1px;font-size:14.5px;color:#222;font-family:'Liberation Serif',serif;">37</div>
<div class="t" style="left:243.8px;top:370.1px;font-size:14.5px;color:#222;font-family:'Liberation Serif',serif;">38</div>
<div class="t" style="left:243.8px;top:388.1px;font-size:14.5px;color:#222;font-family:'Liberation Serif',serif;">39</div>
<div class="t" style="left:243.8px;top:406.1px;font-size:14.5px;color:#222;font-family:'Liberation Serif',serif;">40</div>
<div class="t" style="left:243.8px;top:424.1px;font-size:14.5px;color:#222;font-family:'Liberation Serif',serif;">41</div>
<div class="t" style="left:243.8px;top:442.1px;font-size:14.5px;color:#222;font-family:'Liberation Serif',serif;">42</div>
<div class="t" style="left:243.8px;top:460.1px;font-size:14.5px;color:#222;font-family:'Liberation Serif',serif;">43</div>
<div class="t" style="left:243.8px;top:478.1px;font-size:14.5px;color:#222;font-family:'Liberation Serif',serif;">44</div>
<div class="t" style="left:243.8px;top:496.1px;font-size:14.5px;color:#222;font-family:'Liberation Serif',serif;">45</div>
<div class="t" style="left:243.8px;top:514.1px;font-size:14.5px;color:#222;font-family:'Liberation Serif',serif;">46</div>
<div class="t" style="left:243.8px;top:532.1px;font-size:14.5px;color:#222;font-family:'Liberation Serif',serif;">47</div>
<div class="t" style="left:243.8px;top:550.1px;font-size:14.5px;color:#222;font-family:'Liberation Serif',serif;">48</div>
<div class="t" style="left:243.8px;top:568.1px;font-size:14.5px;color:#222;font-family:'Liberation Serif',serif;">49</div>
<div class="t" style="left:243.8px;top:586.1px;font-size:14.5px;color:#222;font-family:'Liberation Serif',serif;">50</div>
<div class="t" style="left:243.8px;top:604.1px;font-size:14.5px;color:#222;font-family:'Liberation Serif',serif;">51</div>
<div class="t" style="left:243.8px;top:622.1px;font-size:14.5px;color:#222;font-family:'Liberation Serif',serif;">52</div>
<div class="t" style="left:243.8px;top:640.1px;font-size:14.5px;color:#222;font-family:'Liberation Serif',serif;">53</div>
<div class="t" style="left:243.8px;top:658.1px;font-size:14.5px;color:#222;font-family:'Liberation Serif',serif;">54</div>
<div class="t" style="left:388.0px;top:262.7px;font-size:13.9px;color:#000;font-family:'Liberation Serif',serif;">f(x)=g(x)</div>
<div class="t" style="left:388.0px;top:298.7px;font-size:13.9px;color:#000;font-family:'Liberation Serif',serif;">f(x)</div>
<div class="t" style="left:449.0px;top:298.7px;font-size:13.9px;color:#000;font-family:'Liberation Serif',serif;">g(x)</div>
<div class="t" style="left:351.5px;top:316.7px;font-size:13.9px;color:#000;font-family:'Liberation Serif',serif;">x</div>
<div class="t" style="left:404.4px;top:316.7px;font-size:13.9px;color:#000;font-family:'Liberation Serif',serif;">sinx</div>
<div class="t" style="left:450.4px;top:316.7px;font-size:13.9px;color:#000;font-family:'Liberation Serif',serif;">0.5x-1.57</div>
<div class="t" style="left:349.2px;top:334.7px;font-size:13.9px;color:#000;font-family:'Liberation Serif',serif;">-4</div>
<div class="t" style="left:389.9px;top:334.7px;font-size:13.9px;color:#000;font-family:'Liberation Serif',serif;">0.756802</div>
<div class="t" style="left:462.5px;top:334.7px;font-size:13.9px;color:#000;font-family:'Liberation Serif',serif;">-3.57</div>
<div class="t" style="left:349.2px;top:352.7px;font-size:13.9px;color:#000;font-family:'Liberation Serif',serif;">-3</div>
<div class="t" style="left:391.4px;top:352.7px;font-size:13.9px;color:#000;font-family:'Liberation Serif',serif;">-0.14112</div>
<div class="t" style="left:462.5px;top:352.7px;font-size:13.9px;color:#000;font-family:'Liberation Serif',serif;">-3.07</div>
<div class="t" style="left:349.2px;top:370.7px;font-size:13.9px;color:#000;font-family:'Liberation Serif',serif;">-2</div>
<div class="t" style="left:394.6px;top:370.7px;font-size:13.9px;color:#000;font-family:'Liberation Serif',serif;">-0.9093</div>
<div class="t" style="left:462.5px;top:370.7px;font-size:13.9px;color:#000;font-family:'Liberation Serif',serif;">-2.57</div>
<div class="t" style="left:349.2px;top:388.7px;font-size:13.9px;color:#000;font-family:'Liberation Serif',serif;">-1</div>
<div class="t" style="left:391.1px;top:388.7px;font-size:13.9px;color:#000;font-family:'Liberation Serif',serif;">-0.84147</div>
<div class="t" style="left:462.5px;top:388.7px;font-size:13.9px;color:#000;font-family:'Liberation Serif',serif;">-2.07</div>
<div class="t" style="left:351.5px;top:406.7px;font-size:13.9px;color:#000;font-family:'Liberation Serif',serif;">0</div>
<div class="t" style="left:412.5px;top:406.7px;font-size:13.9px;color:#000;font-family:'Liberation Serif',serif;">0</div>
<div class="t" style="left:462.5px;top:406.7px;font-size:13.9px;color:#000;font-family:'Liberation Serif',serif;">-1.57</div>
<div class="t" style="left:351.5px;top:424.7px;font-size:13.9px;color:#000;font-family:'Liberation Serif',serif;">1</div>
<div class="t" style="left:389.9px;top:424.7px;font-size:13.9px;color:#000;font-family:'Liberation Serif',serif;">0.841471</div>
<div class="t" style="left:462.5px;top:424.7px;font-size:13.9px;color:#000;font-family:'Liberation Serif',serif;">-1.07</div>
<div class="t" style="left:351.5px;top:442.7px;font-size:13.9px;color:#000;font-family:'Liberation Serif',serif;">2</div>
<div class="t" style="left:389.9px;top:442.7px;font-size:13.9px;color:#000;font-family:'Liberation Serif',serif;">0.909297</div>
<div class="t" style="left:462.5px;top:442.7px;font-size:13.9px;color:#000;font-family:'Liberation Serif',serif;">-0.57</div>
<div class="t" style="left:351.5px;top:460.7px;font-size:13.9px;color:#000;font-family:'Liberation Serif',serif;">3</div>
<div class="t" style="left:393.7px;top:460.7px;font-size:13.9px;color:#000;font-family:'Liberation Serif',serif;">0.14112</div>
<div class="t" style="left:462.5px;top:460.7px;font-size:13.9px;color:#000;font-family:'Liberation Serif',serif;">-0.07</div>
<div class="t" style="left:335.9px;top:478.7px;font-size:13.9px;color:#000;font-family:'Liberation Serif',serif;">3.1415</div>
<div class="t" style="left:390.3px;top:478.7px;font-size:13.9px;color:#000;font-family:'Liberation Serif',serif;">9.27E-05</div>
<div class="t" style="left:454.4px;top:478.7px;font-size:13.9px;color:#000;font-family:'Liberation Serif',serif;">0.00075</div>
<div class="t" style="left:351.5px;top:496.7px;font-size:13.9px;color:#000;font-family:'Liberation Serif',serif;">4</div>
<div class="t" style="left:394.6px;top:496.7px;font-size:13.9px;color:#000;font-family:'Liberation Serif',serif;">-0.7568</div>
<div class="t" style="left:464.8px;top:496.7px;font-size:13.9px;color:#000;font-family:'Liberation Serif',serif;">0.43</div>
<div class="t" style="left:510.0px;top:478.7px;font-size:13.9px;color:#000;font-family:'Liberation Serif',serif;">&lt;&lt;&lt;&lt;&lt;</div>
<div class="t" style="left:875.7px;top:244.7px;font-size:13.9px;color:#000;font-family:'Liberation Serif',serif;">График№2</div>
<div class="b" style="left:1343px;top:223px;width:1px;height:455px;background:#9a9a9a;"></div>
<div class="b" style="left:238px;top:677px;width:1106px;height:1px;background:#9a9a9a;"></div>
<!-- p_chart -->
<svg class="b" style="left:557px;top:268px;" width="680" height="368" viewBox="0 0 680 368"><rect x="0.500" y="0.500" width="679" height="367" fill="#fff" stroke="#d9d9d9"/><path d="M16.5 61V329" stroke="#d9d9d9"/><path d="M81.5 61V329" stroke="#d9d9d9"/><path d="M145.5 61V329" stroke="#d9d9d9"/><path d="M210.5 61V329" stroke="#d9d9d9"/><path d="M275.5 61V329" stroke="#d9d9d9"/><path d="M339.5 61V329" stroke="#bfbfbf"/><path d="M404.5 61V329" stroke="#d9d9d9"/><path d="M469.5 61V329" stroke="#d9d9d9"/><path d="M533.5 61V329" stroke="#d9d9d9"/><path d="M598.5 61V329" stroke="#d9d9d9"/><path d="M662.5 61V329" stroke="#d9d9d9"/><path d="M16.5 328.5H663" stroke="#d9d9d9"/><path d="M16.5 283.5H663" stroke="#d9d9d9"/><path d="M16.5 239.5H663" stroke="#d9d9d9"/><path d="M16.5 194.5H663" stroke="#d9d9d9"/><path d="M16.5 150.5H663" stroke="#bfbfbf"/><path d="M16.5 105.5H663" stroke="#d9d9d9"/><path d="M16.5 61.5H663" stroke="#d9d9d9"/><path d="M81.2 116.2C91.9 122.9 124.3 143.8 145.8 156.2C167.4 168.5 188.9 185.2 210.5 190.3C232.0 195.5 253.6 194.1 275.1 187.3C296.7 180.6 318.2 162.4 339.8 149.9C361.4 137.4 382.9 119.2 404.5 112.5C426.0 105.7 447.6 104.3 469.1 109.5C490.7 114.6 521.5 136.9 533.8 143.6C546.1 150.4 532.2 143.2 542.9 149.9C553.7 156.6 589.2 178.0 598.4 183.6" fill="none" stroke="#5b9bd5" stroke-width="2" stroke-linecap="round"/><path d="M81.2 308.7C91.9 305.0 124.3 293.9 145.8 286.5C167.4 279.0 188.9 271.6 210.5 264.2C232.0 256.8 253.6 249.4 275.1 242.0C296.7 234.6 318.2 227.1 339.8 219.7C361.4 212.3 382.9 204.9 404.5 197.5C426.0 190.1 447.6 182.7 469.1 175.3C490.7 167.8 521.5 157.2 533.8 153.0C546.1 148.8 532.2 153.6 542.9 149.9C553.7 146.2 589.2 134.0 598.4 130.8" fill="none" stroke="#ed7d31" stroke-width="2" stroke-linecap="round"/><circle cx="81.2" cy="116.2" r="2.800" fill="#5b9bd5"/><circle cx="145.8" cy="156.2" r="2.800" fill="#5b9bd5"/><circle cx="210.5" cy="190.3" r="2.800" fill="#5b9bd5"/><circle cx="275.1" cy="187.3" r="2.800" fill="#5b9bd5"/><circle cx="339.8" cy="149.9" r="2.800" fill="#5b9bd5"/><circle cx="404.5" cy="112.5" r="2.800" fill="#5b9bd5"/><circle cx="469.1" cy="109.5" r="2.800" fill="#5b9bd5"/><circle cx="533.8" cy="143.6" r="2.800" fill="#5b9bd5"/><circle cx="542.9" cy="149.9" r="2.800" fill="#5b9bd5"/><circle cx="598.4" cy="183.6" r="2.800" fill="#5b9bd5"/><circle cx="81.2" cy="308.7" r="2.800" fill="#ed7d31"/><circle cx="145.8" cy="286.5" r="2.800" fill="#ed7d31"/><circle cx="210.5" cy="264.2" r="2.800" fill="#ed7d31"/><circle cx="275.1" cy="242.0" r="2.800" fill="#ed7d31"/><circle cx="339.8" cy="219.7" r="2.800" fill="#ed7d31"/><circle cx="404.5" cy="197.5" r="2.800" fill="#ed7d31"/><circle cx="469.1" cy="175.3" r="2.800" fill="#ed7d31"/><circle cx="533.8" cy="153.0" r="2.800" fill="#ed7d31"/><circle cx="542.9" cy="149.9" r="2.800" fill="#ed7d31"/><circle cx="598.4" cy="130.8" r="2.800" fill="#ed7d31"/><text x="16.5" y="166.89999999999998" font-size="8.500" fill="#595959" text-anchor="middle" font-family="Liberation Sans,sans-serif">-5</text><text x="81.2" y="166.89999999999998" font-size="8.500" fill="#595959" text-anchor="middle" font-family="Liberation Sans,sans-serif">-4</text><text x="145.8" y="166.89999999999998" font-size="8.500" fill="#595959" text-anchor="middle" font-family="Liberation Sans,sans-serif">-3</text><text x="210.5" y="166.89999999999998" font-size="8.500" fill="#595959" text-anchor="middle" font-family="Liberation Sans,sans-serif">-2</text><text x="275.1" y="166.89999999999998" font-size="8.500" fill="#595959" text-anchor="middle" font-family="Liberation Sans,sans-serif">-1</text><text x="339.8" y="166.89999999999998" font-size="8.500" fill="#595959" text-anchor="middle" font-family="Liberation Sans,sans-serif">0</text><text x="404.5" y="166.89999999999998" font-size="8.500" fill="#595959" text-anchor="middle" font-family="Liberation Sans,sans-serif">1</text><text x="469.1" y="166.89999999999998" font-size="8.500" fill="#595959" text-anchor="middle" font-family="Liberation Sans,sans-serif">2</text><text x="533.8" y="166.89999999999998" font-size="8.500" fill="#595959" text-anchor="middle" font-family="Liberation Sans,sans-serif">3</text><text x="598.4" y="166.89999999999998" font-size="8.500" fill="#595959" text-anchor="middle" font-family="Liberation Sans,sans-serif">4</text><text x="663.1" y="166.89999999999998" font-size="8.500" fill="#595959" text-anchor="middle" font-family="Liberation Sans,sans-serif">5</text><text x="331" y="331.7" font-size="8.500" fill="#595959" text-anchor="end" font-family="Liberation Sans,sans-serif">-4</text><text x="331" y="286.7" font-size="8.500" fill="#595959" text-anchor="end" font-family="Liberation Sans,sans-serif">-3</text><text x="331" y="242.7" font-size="8.500" fill="#595959" text-anchor="end" font-family="Liberation Sans,sans-serif">-2</text><text x="331" y="197.7" font-size="8.500" fill="#595959" text-anchor="end" font-family="Liberation Sans,sans-serif">-1</text><text x="331" y="153.7" font-size="8.500" fill="#595959" text-anchor="end" font-family="Liberation Sans,sans-serif">0</text><text x="331" y="108.7" font-size="8.500" fill="#595959" text-anchor="end" font-family="Liberation Sans,sans-serif">1</text><text x="331" y="64.7" font-size="8.500" fill="#595959" text-anchor="end" font-family="Liberation Sans,sans-serif">2</text><text x="339" y="23" font-size="14.300" fill="#595959" text-anchor="middle" font-family="Liberation Sans,sans-serif">f(x)=sin(x)</text><text x="339" y="43" font-size="14.300" fill="#595959" text-anchor="middle" font-family="Liberation Sans,sans-serif">g(x)=0.5x-1.57</text><path d="M290 350.5H313" stroke="#5b9bd5" stroke-width="2"/><circle cx="301.5" cy="350.5" r="2.800" fill="#5b9bd5"/><text x="315.5" y="353.7" font-size="8.500" fill="#595959" font-family="Liberation Sans,sans-serif">Ряд1</text><path d="M345 350.5H368" stroke="#ed7d31" stroke-width="2"/><circle cx="356.5" cy="350.5" r="2.800" fill="#ed7d31"/><text x="370.5" y="353.7" font-size="8.500" fill="#595959" font-family="Liberation Sans,sans-serif">Ряд2</text></svg>
<!-- p_bottom -->
<div class="b" style="left:1344px;top:207px;width:20px;height:470px;background:#e6e6e6;"></div>
<div class="b" style="left:1347px;top:224px;width:15px;height:440px;background:#dadada;"></div>
<div class="b" style="left:1347px;top:208px;width:15px;height:15px;background:#fff;border:1px solid #ababab;"></div>
<svg class="b" style="left:1350px;top:212.5px;" width="9" height="6" viewBox="0 0 9 6"><path d="M0.500 5.500L4.500 1L8.500 5.500z" fill="#777"/></svg>
<div class="b" style="left:1347px;top:460px;width:15px;height:203px;background:#fff;border:1px solid #ababab;"></div>
<div class="b" style="left:1347px;top:664px;width:15px;height:13px;background:#fff;border:1px solid #c6c6c6;"></div>
<svg class="b" style="left:1350px;top:668px;" width="9" height="6" viewBox="0 0 9 6"><path d="M0.500 0.500L4.500 5L8.500 0.500z" fill="#777"/></svg>
<div class="b" style="left:1360px;top:231px;width:10px;height:92px;background:linear-gradient(#d3dadc 0%,#cdd4d7 58%,#a9b0b3 60%,#b3babd 100%);border:1px solid #454545;border-radius:5px 0 0 5px;box-shadow:-3px 3px 9px 2px rgba(0,0,0,0.68);z-index:5;"></div>
<div class="b" style="left:1220px;top:388px;width:127px;height:20px;background:linear-gradient(#ffffff,#e4e5f0);border:1px solid #767676;border-radius:3px;box-shadow:2px 2px 3px rgba(0,0,0,0.5);z-index:4;"></div>
<div class="t" style="left:1226.5px;top:392.0px;font-size:12px;color:#575757;letter-spacing:-0.102px;z-index:4;">Область построения</div>
<div class="b" style="left:238px;top:678px;width:1106px;height:27px;background:#e6e6e6;"></div>
<svg class="b" style="left:263px;top:685px;" width="6" height="10" viewBox="0 0 6 10"><path d="M5.500 1V9L0.500 5z" fill="#c0c0c0"/></svg>
<svg class="b" style="left:292px;top:685px;" width="6" height="10" viewBox="0 0 6 10"><path d="M0.500 1V9L5.500 5z" fill="#c0c0c0"/></svg>
<div class="b" style="left:338px;top:678px;width:60px;height:24px;background:#fff;border-bottom:2.500px solid #217346;border-left:1px solid #c6c6c6;border-right:1px solid #c6c6c6;"></div>
<div class="t" style="left:350.0px;top:684.7px;font-size:12.5px;color:#217346;font-weight:bold;letter-spacing:-0.096px;">Лист1</div>
<svg class="b" style="left:430px;top:682px;" width="17" height="17" viewBox="0 0 17 17"><circle cx="8.500" cy="8.500" r="7.500" fill="none" stroke="#777" stroke-width="1.100"/><path d="M8.500 4.500v8M4.500 8.500h8" stroke="#666" stroke-width="1.700"/></svg>
<svg class="b" style="left:914px;top:685px;" width="3" height="12" viewBox="0 0 3 12"><rect x="0.500" y="0" width="1.500" height="1.500" fill="#a0a0a0"/><rect x="0.500" y="4.500" width="1.500" height="1.500" fill="#a0a0a0"/><rect x="0.500" y="9" width="1.500" height="1.500" fill="#a0a0a0"/></svg>
<div class="b" style="left:931px;top:684px;width:413px;height:15px;background:#dadada;"></div>
<div class="b" style="left:931px;top:684px;width:15px;height:15px;background:#fff;border:1px solid #ababab;"></div>
<svg class="b" style="left:936px;top:687px;" width="6" height="9" viewBox="0 0 6 9"><path d="M5.500 0.500V8.500L0.500 4.500z" fill="#666"/></svg>
<div class="b" style="left:945px;top:684px;width:296px;height:15px;background:#fff;border:1px solid #ababab;"></div>
<div class="b" style="left:1329px;top:684px;width:15px;height:15px;background:#fff;border:1px solid #ababab;"></div>
<svg class="b" style="left:1334px;top:687px;" width="6" height="9" viewBox="0 0 6 9"><path d="M0.500 0.500V8.500L5.500 4.500z" fill="#666"/></svg>
<div class="b" style="left:1px;top:705px;width:1364px;height:22px;background:#f1f1f1;"></div>
<div class="b" style="left:1px;top:705px;width:1364px;height:1px;background:#c6c6c6;"></div>
<div class="t" style="left:9.5px;top:710.3px;font-size:11.5px;color:#444;letter-spacing:-0.002px;">Готово</div>
<div class="t" style="left:72.0px;top:710.3px;font-size:11.5px;color:#444;letter-spacing:-0.204px;">Scroll Lock</div>
<div class="b" style="left:1062px;top:705px;width:38px;height:22px;background:#d0d0d0;"></div>
<svg class="b" style="left:1074px;top:709px;" width="14" height="14" viewBox="0 0 14 14"><rect x="0.500" y="0.500" width="12" height="12" fill="none" stroke="#666"/><path d="M4.500 0.500v12M8.500 0.500v12M0.500 4.500h12M0.500 8.500h12" stroke="#666"/></svg>
<svg class="b" style="left:1112px;top:709px;" width="14" height="14" viewBox="0 0 14 14"><rect x="0.500" y="0.500" width="12" height="12" fill="none" stroke="#666"/><rect x="3.500" y="3.500" width="6" height="6" fill="none" stroke="#666"/><path d="M4.500 5.500h4M4.500 7.500h4" stroke="#666"/></svg>
<svg class="b" style="left:1150px;top:709px;" width="14" height="14" viewBox="0 0 14 14"><rect x="0.500" y="0.500" width="12" height="12" fill="none" stroke="#666"/><path d="M4.500 0.500v6h4v-6" fill="none" stroke="#666"/></svg>
<div class="b" style="left:1180.5px;top:715px;width:6px;height:1.5px;background:#555;"></div>
<div class="b" style="left:1191px;top:715px;width:100px;height:1px;background:#a0a0a0;"></div>
<div class="b" style="left:1241px;top:713px;width:1px;height:5.5px;background:#a0a0a0;"></div>
<div class="b" style="left:1231px;top:710px;width:4px;height:11px;background:#555;"></div>
<svg class="b" style="left:1295px;top:711px;" width="9" height="9" viewBox="0 0 9 9"><path d="M4 0.500v8M0 4.500h8" stroke="#555" stroke-width="1.800"/></svg>
<div class="t" style="left:1318.6px;top:710.3px;font-size:11.5px;color:#444;letter-spacing:-0.706px;">85%</div>
<div class="b" style="left:0px;top:726.5px;width:1366px;height:1.5px;background:#217346;"></div>
<!-- p_taskbar -->
<div class="b" style="left:0px;top:728px;width:1366px;height:40px;background:linear-gradient(180deg,rgba(0,0,0,0.18),rgba(0,0,0,0) 60%,rgba(255,255,255,0.03)),linear-gradient(90deg,#0d0d0d 0%,#0f0e0e 21%,#362e2b 23.500%,#3f3632 30%,#493f3a 40%,#443b36 48%,#352d2a 57%,#272220 70%,#1d1a19 82%,#0e0d0d 96%);"></div>
<div class="b" style="left:0px;top:728px;width:1366px;height:1px;background:rgba(255,255,255,0.12);"></div>
<div class="b" style="left:1px;top:729px;width:13px;height:38px;background:linear-gradient(135deg,#4a4a4a 0%,#2a2a2a 40%,#111 100%);border:1px solid #707070;border-radius:1px;"></div>
<div class="t" style="left:44.8px;top:734.7px;font-size:12.4px;color:#fff;letter-spacing:-0.046px;">19:17</div>
<div class="t" style="left:27.2px;top:751.7px;font-size:12.4px;color:#fff;letter-spacing:0.466px;">03/11/2016</div>
<svg class="b" style="left:112px;top:742px;" width="16" height="12" viewBox="0 0 16 12"><rect x="1" y="9" width="2" height="2" fill="#fff"/><rect x="4" y="7" width="2" height="4" fill="#fff"/><rect x="7" y="5" width="2" height="6" fill="#fff"/><rect x="10" y="3" width="2" height="8" fill="#fff"/><rect x="13" y="1" width="2" height="10" fill="#fff"/></svg>
<svg class="b" style="left:137px;top:741px;" width="14" height="14" viewBox="0 0 14 14"><path d="M1 5h3l4-4v12l-4-4H1z" fill="#fff"/><path d="M10.500 4.500c1.200 1.500 1.200 3.500 0 5" stroke="#ddd" fill="none"/></svg>
<svg class="b" style="left:164px;top:746px;" width="8" height="5" viewBox="0 0 8 5"><path d="M0 5L4 0.500L8 5z" fill="#fff"/></svg>
<div class="t" style="left:188.9px;top:740.0px;font-size:12px;color:#fff;transform:scaleX(0.8218);transform-origin:0 0;">EN</div>
<div class="t" style="left:213.6px;top:729.6px;font-size:14px;color:#fff;font-weight:bold;">«</div>
<div class="t" style="left:229.5px;top:741.2px;font-size:13.1px;color:#fff;font-family:'DejaVu Sans','Liberation Sans',sans-serif;">שולחן העבודה</div>
<svg class="b" style="left:325px;top:732px;" width="34" height="34" viewBox="0 0 34 34"><rect x="2.500" y="12.500" width="28" height="18" fill="#efe9a8" stroke="#cfcfcf" stroke-width="1.500"/><path d="M8 26h16" stroke="#b7ad63"/><path d="M1 1L18 22l2.500 1.500L20 20z" fill="#222" stroke="#888" stroke-width="0.700"/><path d="M22 24l2-4l2 4" stroke="#c33" fill="none" stroke-width="0.800"/></svg>
<svg class="b" style="left:828px;top:733px;" width="30" height="28" viewBox="0 0 30 28"><rect x="1" y="1" width="28" height="26" fill="#2a0a08" stroke="#d6221c" stroke-width="2"/><path d="M8 21c3-3 5.500-8 6.500-12.500c0.400-2 -1.200-2.500-1.500-0.800c-0.300 3 2.500 8 9 9.300c1.500 0.200 1.500-1.200-0.300-1.200c-4.500 0-10 2-13.700 5.200z" fill="none" stroke="#fff" stroke-width="1.200"/></svg>
<svg class="b" style="left:889px;top:733px;" width="32" height="30" viewBox="0 0 32 30"><path d="M0 4L17 0V30L0 26z" fill="#2b579a"/><rect x="16" y="4.500" width="13.500" height="21" fill="#fff" stroke="#2b579a"/><path d="M19 8h9M19 11h9M19 14h9M19 17h9M19 20h9M19 23h9" stroke="#2b579a" stroke-width="1.200"/><text x="8.500" y="19.5" font-family="Liberation Sans,sans-serif" font-weight="bold" font-size="12" fill="#fff" text-anchor="middle">W</text></svg>
<svg class="b" style="left:952px;top:733px;" width="32" height="30" viewBox="0 0 32 30"><path d="M0 4L17 0V30L0 26z" fill="#d24726"/><rect x="16" y="4.500" width="13.500" height="21" fill="#fff" stroke="#d24726"/><path d="M22.500 7.500a4 4 0 1 0 4 4h-4z" fill="#d24726"/><path d="M23.500 6.500a4 4 0 0 1 4 4h-4z" fill="#d24726"/><path d="M19 19h9M19 22h9" stroke="#d24726" stroke-width="1.300"/><text x="8.500" y="20" font-family="Liberation Sans,sans-serif" font-weight="bold" font-size="13" fill="#fff" text-anchor="middle">P</text></svg>
<svg class="b" style="left:1013px;top:733px;" width="32" height="30" viewBox="0 0 32 30"><path d="M0 4L17 0V30L0 26z" fill="#0072c6"/><rect x="15" y="8" width="16" height="13" fill="#fff" stroke="#0072c6"/><path d="M15 8l8 7l8-7" fill="none" stroke="#0072c6" stroke-width="1.800"/><text x="8.500" y="20" font-family="Liberation Sans,sans-serif" font-weight="bold" font-size="13" fill="#fff" text-anchor="middle">O</text></svg>
<svg class="b" style="left:1075px;top:733px;" width="32" height="30" viewBox="0 0 32 30"><path d="M0 4L17 0V30L0 26z" fill="#80397b"/><rect x="15" y="4" width="13" height="22" fill="#fff" stroke="#80397b"/><path d="M29.500 6v4M29.500 12v4M29.500 18v4" stroke="#80397b" stroke-width="2.500"/><path d="M18 9h8M18 13h8M18 17h8" stroke="#80397b" stroke-opacity="0.500"/><text x="8.500" y="20" font-family="Liberation Sans,sans-serif" font-weight="bold" font-size="13" fill="#fff" text-anchor="middle">N</text></svg>
<div class="b" style="left:999px;top:730px;width:2px;height:36px;background:linear-gradient(90deg,rgba(0,0,0,0.45) 50%,rgba(255,255,255,0.08) 50%);"></div>
<div class="b" style="left:1058px;top:730px;width:2px;height:36px;background:linear-gradient(90deg,rgba(0,0,0,0.45) 50%,rgba(255,255,255,0.08) 50%);"></div>
<div class="b" style="left:1124px;top:729px;width:58px;height:38px;background:linear-gradient(135deg,#d2d2d2 0%,#a9a9a9 45%,#7d7d7d 55%,#9a9a9a 100%);border:1px solid #e8e8e8;border-radius:3px;"></div>
<svg class="b" style="left:1138px;top:733px;" width="32" height="30" viewBox="0 0 32 30"><path d="M0 4L17 0V30L0 26z" fill="#1e7145"/><rect x="16" y="4.500" width="13.500" height="21" fill="#fff" stroke="#1e7145"/><path d="M16 8.700h13.500M16 12.900h13.500M16 17.100h13.500M16 21.300h13.500M21 4.500v21M25.500 4.500v21" stroke="#1e7145" stroke-width="0.900"/><text x="8.500" y="20.5" font-family="Liberation Sans,sans-serif" font-weight="bold" font-size="15" fill="#fff" text-anchor="middle">X</text></svg>
<div class="b" style="left:1186px;top:729px;width:58px;height:38px;background:linear-gradient(135deg,#6c6c6c 0%,#4a4a4a 48%,#2e2e2e 52%,#3a3a3a 100%);border:1px solid #8a8a8a;border-radius:3px;"></div>
<svg class="b" style="left:1199px;top:732px;" width="34" height="34" viewBox="0 0 34 34"><circle cx="11.500" cy="11.500" r="9.500" fill="#00aff0"/><circle cx="22" cy="22" r="9.500" fill="#00aff0"/><circle cx="16.500" cy="16.500" r="12.500" fill="#00aff0"/><text x="16.500" y="25" font-family="Liberation Sans,sans-serif" font-weight="bold" font-size="24" fill="#fff" text-anchor="middle">S</text></svg>
<div class="b" style="left:1248px;top:729px;width:58px;height:38px;background:linear-gradient(135deg,#6c6c6c 0%,#4a4a4a 48%,#2e2e2e 52%,#3a3a3a 100%);border:1px solid #8a8a8a;border-radius:3px;"></div>
<svg class="b" style="left:1262px;top:733px;" width="30" height="30" viewBox="0 0 30 30"><circle cx="15" cy="15" r="14.500" fill="#dd4b3e"/><path d="M15 15L2.500 7.800A14.500 14.500 0 0 0 15 29.500z" fill="#1a9f5b"/><path d="M15 15L15 29.500A14.500 14.500 0 0 0 27.500 7.800z" fill="#ffcd40"/><path d="M15 15L2.500 7.800A14.500 14.500 0 0 1 27.500 7.800z" fill="#dd4b3e"/><path d="M15 15l-5.600 3.200L4 8.800" fill="#1a9f5b"/><circle cx="15" cy="15" r="6.800" fill="#fff"/><circle cx="15" cy="15" r="5.300" fill="#4a8af4"/></svg>
<svg class="b" style="left:1319px;top:729px;" width="40" height="39" viewBox="0 0 40 39"><defs><radialGradient id="orb" cx="50%" cy="30%" r="70%"><stop offset="0" stop-color="#8fcdf0"/><stop offset="0.450" stop-color="#2f7fc0"/><stop offset="0.750" stop-color="#0f3f72"/><stop offset="1" stop-color="#1a6fb0"/></radialGradient><radialGradient id="orbg" cx="50%" cy="100%" r="45%"><stop offset="0" stop-color="#35d0ff" stop-opacity="0.900"/><stop offset="1" stop-color="#35d0ff" stop-opacity="0"/></radialGradient></defs><circle cx="20" cy="19.500" r="18.800" fill="url(#orb)" stroke="#9fd0ea" stroke-opacity="0.700" stroke-width="1"/><circle cx="20" cy="19.500" r="18.300" fill="url(#orbg)"/><path d="M11.500 10.500c3-1.700 6-1.800 8.800-0.300l-1.700 7.800c-2.800-1.500-5.800-1.400-8.800 0.300z" fill="#f26522"/><path d="M21.800 10.800c2.800 1.500 5.800 1.400 8.800-0.300l-1.700 7.800c-3 1.700-6 1.800-8.800 0.300z" fill="#8dc63f"/><path d="M9.300 20c3-1.700 6-1.800 8.800-0.300l-1.700 7.800c-2.800-1.500-5.800-1.400-8.800 0.300z" fill="#2aa9e0"/><path d="M19.600 20.300c2.800 1.500 5.800 1.400 8.800-0.300l-1.700 7.800c-3 1.700-6 1.800-8.800 0.300z" fill="#ffc20e"/></svg>
</body></html>
